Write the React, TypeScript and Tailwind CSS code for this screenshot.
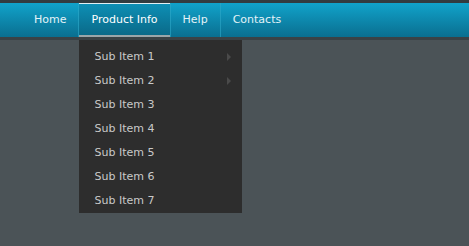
import React from 'react';

const navItems = ['Home', 'Product Info', 'Help', 'Contacts'];
const subItems = [
  { label: 'Sub Item 1', arrow: true },
  { label: 'Sub Item 2', arrow: true },
  { label: 'Sub Item 3' },
  { label: 'Sub Item 4' },
  { label: 'Sub Item 5' },
  { label: 'Sub Item 6' },
  { label: 'Sub Item 7' },
];

export default function App() {
  return (
    <div
      className="w-[469px] h-[246px] bg-[#4b5357] overflow-hidden"
      style={{ fontFamily: '"DejaVu Sans", Verdana, sans-serif' }}
    >
      <div className="h-[3px] bg-[#323c40]" />
      {/* Menu bar */}
      <div className="h-[34px] bg-gradient-to-b from-[#11a3cb] to-[#0a6f90] flex pl-[22px]">
        {navItems.map((item, i) => {
          const active = item === 'Product Info';
          return (
            <div key={item} className="flex">
              {i > 0 && <div className="w-px bg-[#2fa9c8]/60" />}
              <div
                className={`relative flex items-center px-3 pt-px text-[11px] ${
                  active
                    ? 'text-white bg-gradient-to-b from-[#0d8fb5] to-[#0a6a89] border-t border-[#dfeff4] border-b-2 border-b-[#9aa6aa]'
                    : 'text-[#e4f3f8]'
                }`}
              >
                {item}
                {active && (
                  <div className="absolute left-0 top-[36px] w-[163px] bg-[#2d2d2d] pt-[5px] z-10">
                    {subItems.map((s) => (
                      <div
                        key={s.label}
                        className="h-[24px] flex items-center justify-between pl-[15px] pr-[11px] text-[11px] text-[#c9c9c9]"
                      >
                        <span>{s.label}</span>
                        {s.arrow && (
                          <span className="w-0 h-0 border-y-[4px] border-y-transparent border-l-[4px] border-l-[#4a4a4a]" />
                        )}
                      </div>
                    ))}
                  </div>
                )}
              </div>
            </div>
          );
        })}
      </div>
      <div className="h-[3px] bg-[#3a4246]" />
    </div>
  );
}
